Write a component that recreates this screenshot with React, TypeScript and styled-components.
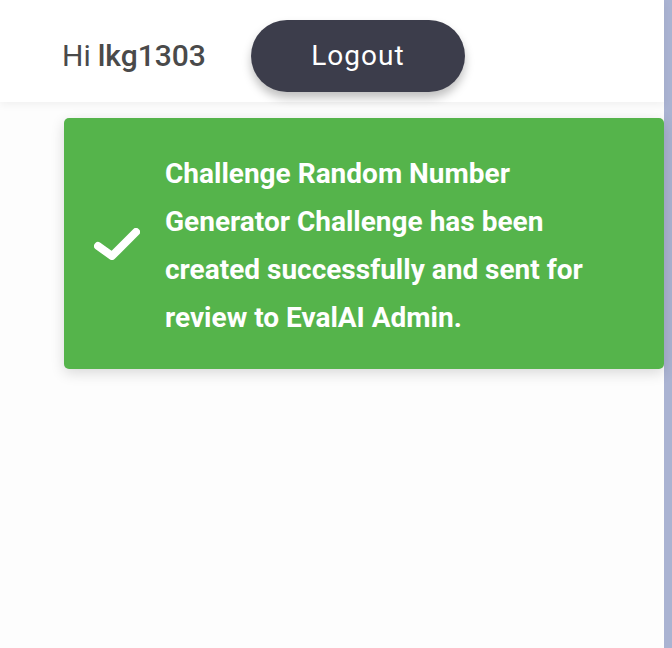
import React from "react";
import styled, { createGlobalStyle } from "styled-components";

const Global = createGlobalStyle`
  html, body { margin: 0; padding: 0; background: #fdfdfd; }
  body { font-family: Roboto, "Noto Sans", sans-serif; }
`;

const Page = styled.div`
  display: flex;
  width: 672px;
  height: 648px;
  overflow: hidden;
`;

const Main = styled.div`
  position: relative;
  flex: 1;
  display: flex;
  flex-direction: column;
  background: #fdfdfd;
`;

const Strip = styled.div`
  width: 8px;
  background: #aab3d2;
`;

const Header = styled.header`
  height: 102px;
  box-sizing: border-box;
  display: flex;
  align-items: flex-start;
  padding: 20px 0 0 62px;
  gap: 45px;
  background: #ffffff;
  box-shadow: 0 3px 8px rgba(0, 0, 0, 0.05);
`;

const Greeting = styled.span`
  height: 72px;
  display: flex;
  align-items: center;
  font-size: 30px;
  color: #4a4a4a;
  padding-bottom: 2px;
  box-sizing: border-box;
  b { font-weight: 500; margin-left: 7px; }
`;

const LogoutButton = styled.button`
  width: 214px;
  height: 72px;
  border: none;
  border-radius: 36px;
  background: #3c3d4b;
  color: #ffffff;
  font-family: Roboto, sans-serif;
  font-size: 28px;
  letter-spacing: 1px;
  box-shadow: 0 6px 10px rgba(0, 0, 0, 0.25);
  padding: 0 0 2px;
`;

const Toast = styled.div`
  position: absolute;
  top: 118px;
  left: 64px;
  width: 600px;
  height: 251px;
  box-sizing: border-box;
  display: flex;
  align-items: center;
  background: #55b44b;
  border-radius: 5px;
  box-shadow: 0 4px 14px rgba(0, 0, 0, 0.15);
  padding: 4px 0 0 29px;
`;

const IconBox = styled.div`
  width: 72px;
  flex: none;
  display: flex;
  align-items: center;
  svg { filter: blur(0.6px); }
`;

const Message = styled.p`
  margin: 0;
  width: 445px;
  color: #ffffff;
  font-size: 28px;
  font-weight: 700;
  line-height: 48px;
`;

export default function App() {
  return (
    <>
      <Global />
      <Page>
        <Main>
          <Header>
            <Greeting>
              Hi<b>lkg1303</b>
            </Greeting>
            <LogoutButton>Logout</LogoutButton>
          </Header>
          <Toast>
            <IconBox>
              <svg width="50" height="40" viewBox="0 0 50 40">
                <polyline
                  points="5,20 19,30 43,6"
                  fill="none"
                  stroke="#ffffff"
                  strokeWidth="8"
                  strokeLinecap="round"
                  strokeLinejoin="round"
                />
              </svg>
            </IconBox>
            <Message>
              Challenge Random Number Generator Challenge has been created
              successfully and sent for review to EvalAI Admin.
            </Message>
          </Toast>
        </Main>
        <Strip />
      </Page>
    </>
  );
}
